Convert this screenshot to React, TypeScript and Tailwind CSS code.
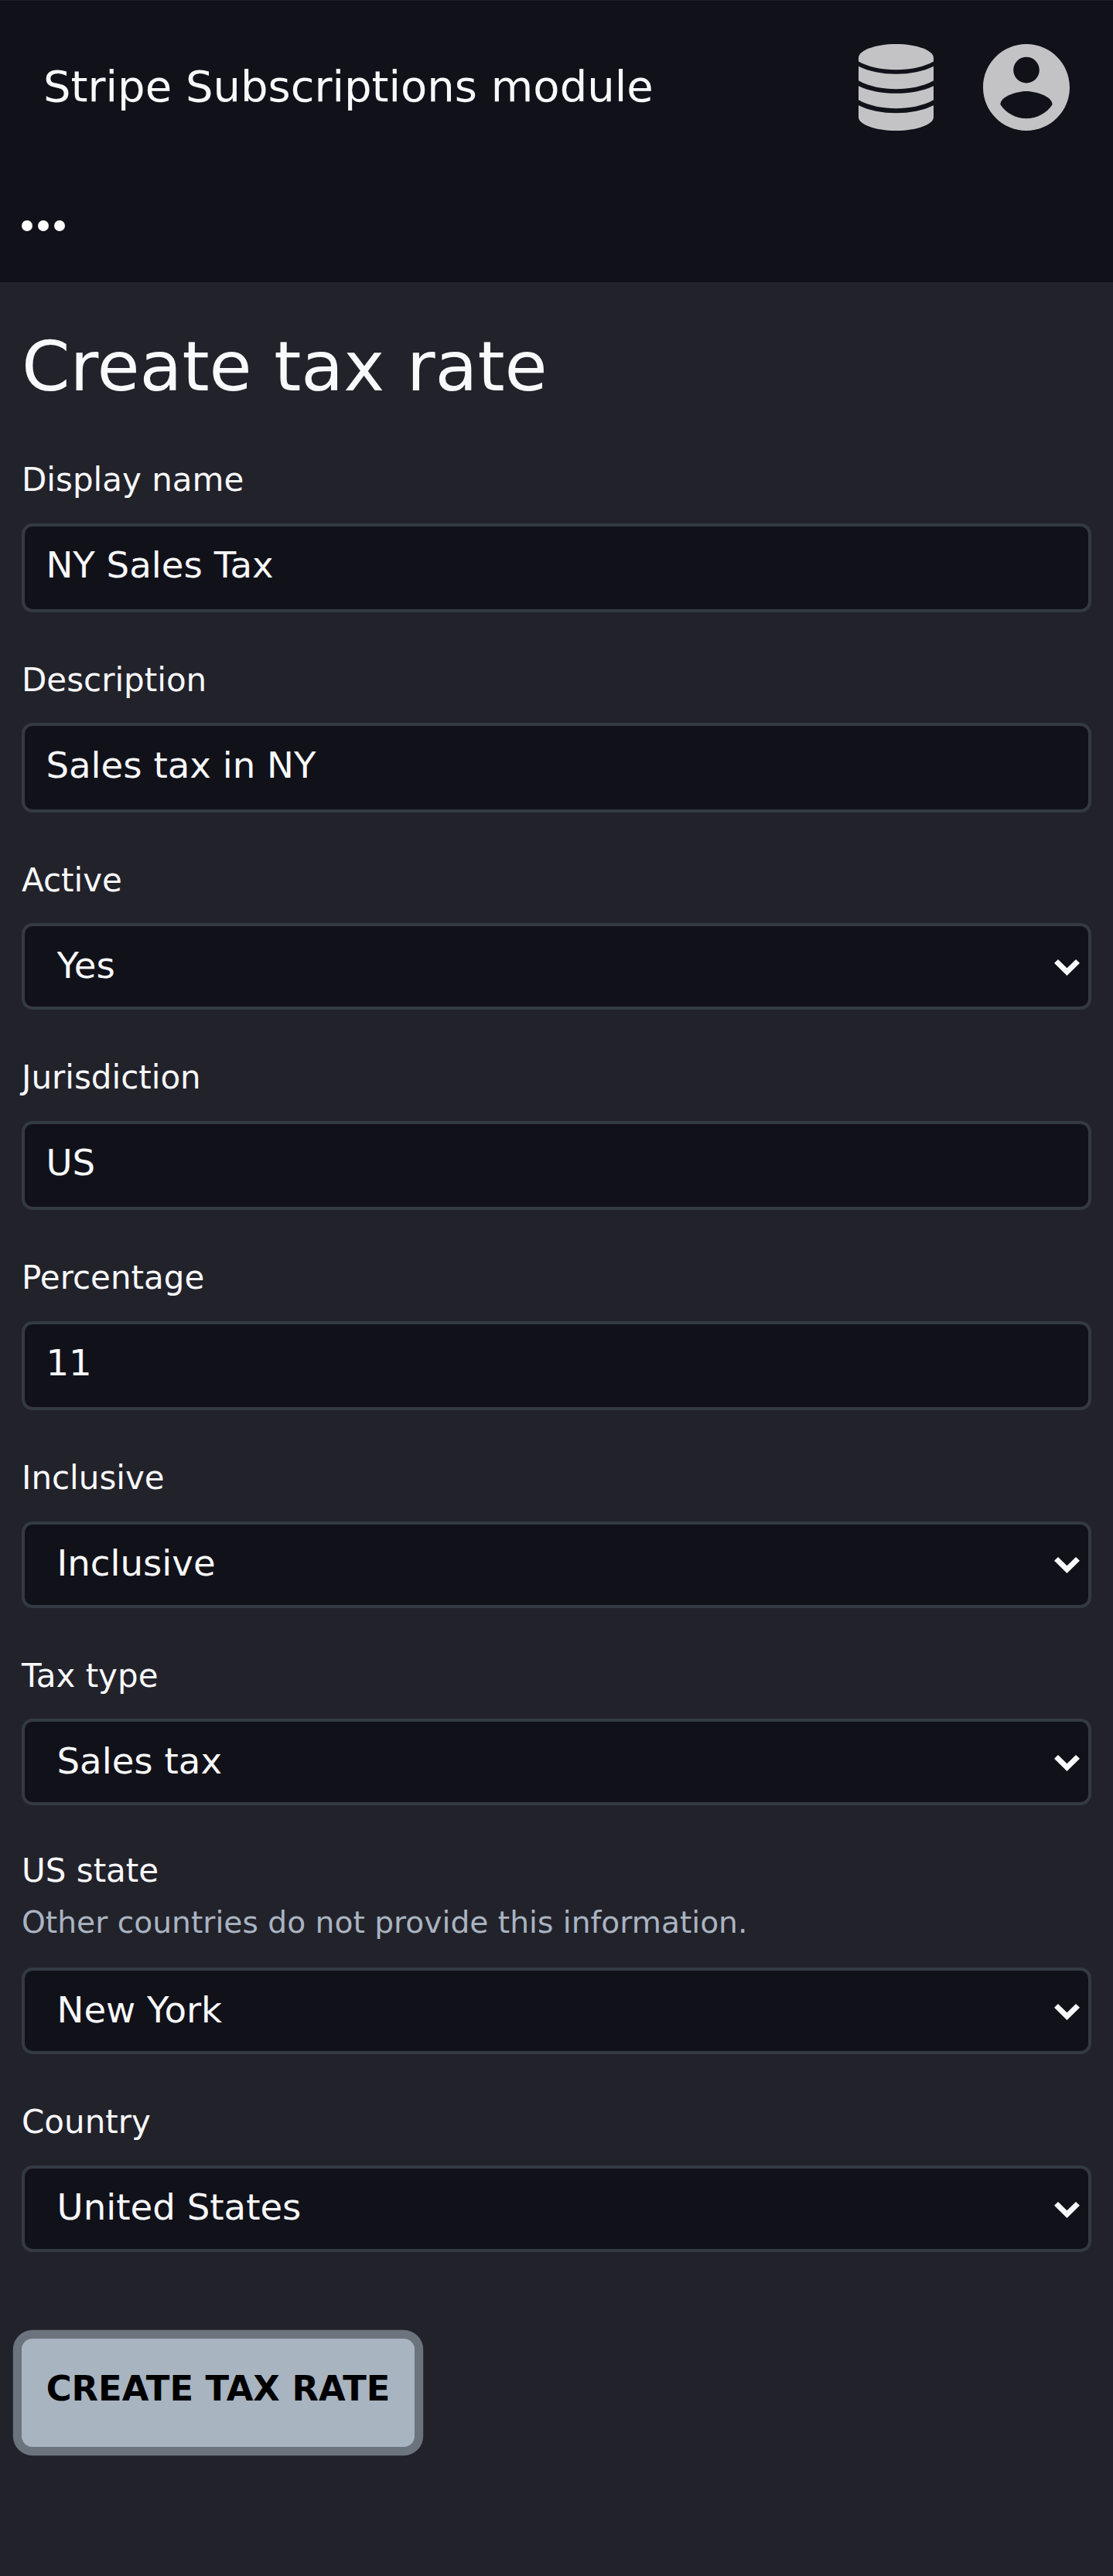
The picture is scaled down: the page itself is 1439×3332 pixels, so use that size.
import type { ReactNode } from "react";

function DatabaseIcon() {
  return (
    <svg className="h-[112px] w-[97px]" viewBox="90 110.5 291 336" preserveAspectRatio="none" fill="currentColor">
      <path d="M90 164C90 135 155 110.5 235.5 110.5S381 135 381 164V178C345 199 292 210 235.5 210S126 199 90 178Z" />
      <path d="M90 197C130 217 182 227 235.5 227S341 217 381 197V252C341 275 285 285 235.5 285S130 275 90 252Z" />
      <path d="M90 273C130 292 182 302 235.5 302S341 292 381 273V327C341 350 285 360 235.5 360S130 350 90 327Z" />
      <path d="M90 348C130 368 182 378 235.5 378S341 368 381 348V394C381 423 316 446.5 235.5 446.5S90 423 90 394Z" />
    </svg>
  );
}

function AccountIcon() {
  return (
    <svg className="size-[112px]" viewBox="2 2 20 20" fill="currentColor">
      <path d="M12 2C6.48 2 2 6.48 2 12s4.48 10 10 10 10-4.48 10-10S17.52 2 12 2zm0 3c1.66 0 3 1.34 3 3s-1.34 3-3 3-3-1.34-3-3 1.34-3 3-3zm0 14.2c-2.5 0-4.71-1.28-6-3.22.03-1.99 4-3.08 6-3.08 1.99 0 5.97 1.09 6 3.08-1.29 1.94-3.5 3.22-6 3.22z" />
    </svg>
  );
}

function Label({ children }: { children: ReactNode }) {
  return <label className="block h-[80.6px] text-[42px] leading-[49px]">{children}</label>;
}

function TextField({ label, value }: { label: string; value: string }) {
  return (
    <div className="mb-[63px]">
      <Label>{label}</Label>
      <input
        className="block h-[115.3px] w-full rounded-[14px] border-4 border-[#343a42] bg-[#11111a] pt-[23px] pr-7 pb-[30px] pl-[27.4px] text-[46.67px] leading-[54px] outline-none"
        defaultValue={value}
      />
    </div>
  );
}

function Select({ value }: { value: string }) {
  return (
    <div className="relative">
      <select
        className="block h-[112px] w-full appearance-none rounded-[14px] border-4 border-[#343a42] bg-[#11111a] pt-[23.5px] pb-[26.5px] pl-[41.5px] text-[46.67px] leading-[54px] outline-none"
        defaultValue={value}
      >
        <option>{value}</option>
      </select>
      <svg className="pointer-events-none absolute top-[46.6px] right-[15.3px] h-[21px] w-[33px]" viewBox="188 243 99 63" fill="currentColor">
        <path d="M188 257L203 243L237.500 277L272 243L287 257L237.500 306Z" />
      </svg>
    </div>
  );
}

function SelectField({ label, value }: { label: string; value: string }) {
  return (
    <div className="mb-[63px]">
      <Label>{label}</Label>
      <Select value={value} />
    </div>
  );
}

export default function App() {
  return (
    <div className="min-h-[3332px] w-full bg-[#22222b] pt-px font-['DejaVu_Sans',sans-serif] text-[#f8f9fa]">
      <header className="h-[364px] bg-[#11111a]">
        <div className="flex h-[224px] items-center justify-between px-14">
          <span className="pb-[4px] text-[56px] leading-[65px]">Stripe Subscriptions module</span>
          <div className="flex items-center gap-16 text-[#c3c3c5]">
            <DatabaseIcon />
            <AccountIcon />
          </div>
        </div>
        <div className="flex gap-[7px] pt-[59.5px] pl-7">
          <span className="size-[14px] rounded-full bg-white" />
          <span className="size-[14px] rounded-full bg-white" />
          <span className="size-[14px] rounded-full bg-white" />
        </div>
      </header>
      <main className="px-7 pt-[57px]">
        <h1 className="h-[174px] text-[89.6px] leading-[104px]">Create tax rate</h1>
        <TextField label="Display name" value="NY Sales Tax" />
        <TextField label="Description" value="Sales tax in NY" />
        <SelectField label="Active" value="Yes" />
        <TextField label="Jurisdiction" value="US" />
        <TextField label="Percentage" value="11" />
        <SelectField label="Inclusive" value="Inclusive" />
        <SelectField label="Tax type" value="Sales tax" />
        <div className="-mt-[66.3px] mb-[63px] pt-[63px]">
          <label className="block h-[68.6px] text-[42px] leading-[49px]">US state</label>
          <p className="h-[81.7px] text-[39.2px] leading-[46px] text-[#a9b4c1]">Other countries do not provide this information.</p>
          <Select value="New York" />
        </div>
        <SelectField label="Country" value="United States" />
        <button className="mt-[112px] block h-[140px] w-[508px] rounded-[14px] bg-[#a9b4c1] pb-[9px] text-center text-[44.8px] leading-[52px] font-bold whitespace-nowrap text-black ring-[11.2px] ring-[#6b737d]">
          CREATE TAX RATE
        </button>
      </main>
    </div>
  );
}
